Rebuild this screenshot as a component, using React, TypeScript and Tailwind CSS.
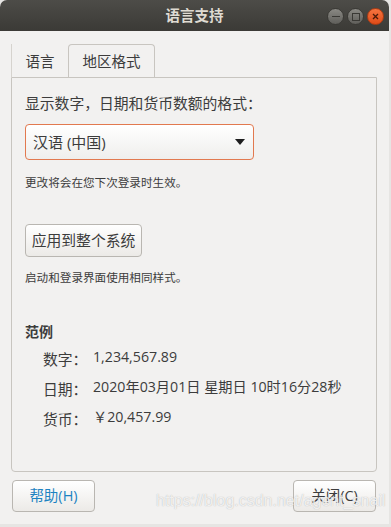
const font = { fontFamily: '"Open Sans", "Noto Sans CJK SC", sans-serif' };

const samples = [
  { label: "数字：", value: "1,234,567.89" },
  { label: "日期：", value: "2020年03月01日 星期日 10时16分28秒" },
  { label: "货币：", value: "￥20,457.99" },
];

function TitleButton({ kind }: { kind: "min" | "max" | "close" }) {
  if (kind === "close") {
    return (
      <div className="flex h-[17px] w-[17px] items-center justify-center rounded-full border border-[#b23c12] bg-gradient-to-b from-[#f6743f] to-[#df4b16]">
        <svg width="7" height="7" viewBox="0 0 7 7">
          <path d="M1 1L6 6M6 1L1 6" stroke="#4a1a08" strokeWidth="1.3" />
        </svg>
      </div>
    );
  }
  return (
    <div className="flex h-[17px] w-[17px] items-center justify-center rounded-full border border-[#3a3935] bg-gradient-to-b from-[#8a8984] to-[#5f5e5a]">
      {kind === "min" ? (
        <div className="h-[1.5px] w-[8px] bg-[#3a3935]" />
      ) : (
        <div className="h-[8px] w-[8px] border-[1.5px] border-[#3a3935]" />
      )}
    </div>
  );
}

export default function App() {
  return (
    <div className="relative h-[527px] w-[391px] overflow-hidden bg-[#e6e5e3] text-[#3c3c3c]" style={font}>
      <div className="flex h-[524px] w-[389px] flex-col overflow-hidden rounded-t-[7px] bg-[#f2f1f0]">
        {/* title bar */}
        <div className="relative flex h-[31px] shrink-0 items-center justify-center bg-gradient-to-b from-[#4d4c48] to-[#3b3a36]">
          <span className="text-[14.5px] font-bold text-[#dfdbd2]">语言支持</span>
          <div className="absolute right-[5px] top-[8px] flex gap-[3px]">
            <TitleButton kind="min" />
            <TitleButton kind="max" />
            <TitleButton kind="close" />
          </div>
        </div>

        {/* tabs */}
        <div className="ml-[11px] mt-[13px] flex h-[33px] items-stretch">
          <div className="flex w-[57px] items-center justify-center border-l border-[#d6d3ce] pt-[2px] text-[14.5px]">
            语言
          </div>
          <div className="flex w-[87px] items-center justify-center rounded-t-[4px] border border-b-0 border-[#c8c5c0] pt-[2px] text-[14.5px]">
            地区格式
          </div>
        </div>

        {/* panel */}
        <div className="ml-[11px] flex h-[395px] w-[366px] flex-col rounded-b-[4px] border border-[#c8c5c0] px-[13px]">
          <div className="mt-[15px] text-[14.8px] leading-[20px]">显示数字，日期和货币数额的格式：</div>

          <div className="mt-[11px] flex h-[36px] w-[229px] items-center justify-between rounded-[4px] border border-[#e2794f] bg-gradient-to-b from-[#ffffff] to-[#efeeec] pl-[7px] pr-[8px]">
            <span className="text-[15px]">汉语 (中国)</span>
            <svg width="10" height="6" viewBox="0 0 10 6">
              <path d="M0 0H10L5 6Z" fill="#1e1e1e" />
            </svg>
          </div>

          <div className="mt-[15px] text-[11.6px] leading-[16px]">更改将会在您下次登录时生效。</div>

          <div className="mt-[33px] flex h-[33px] w-[117px] items-center justify-center rounded-[4px] border border-[#b9b6b1] bg-gradient-to-b from-[#ffffff] to-[#eceae7] text-[14.8px]">
            应用到整个系统
          </div>

          <div className="mt-[13px] text-[11.6px] leading-[16px]">启动和登录界面使用相同样式。</div>

          <div className="mt-[36px] text-[14px] font-bold leading-[20px]">范例</div>

          <div className="mt-[1px] flex flex-col pl-[18px]">
            {samples.map((s) => (
              <div key={s.label} className="flex h-[30px] items-center">
                <span className="w-[50px] pt-[2px] text-[14.8px]">{s.label}</span>
                <span className="pb-[2px] text-[14.2px]">{s.value}</span>
              </div>
            ))}
          </div>
        </div>

        {/* bottom buttons */}
        <div className="mt-[8px] flex justify-between pl-[12px] pr-[13px]">
          <div className="flex h-[32px] w-[83px] items-center justify-center rounded-[4px] border border-[#b9b6b1] bg-gradient-to-b from-[#ffffff] to-[#eceae7] text-[14.5px] text-[#1d83c2]">
            帮助(H)
          </div>
          <div className="flex h-[32px] w-[83px] items-center justify-center rounded-[4px] border border-[#b9b6b1] bg-gradient-to-b from-[#ffffff] to-[#eceae7] text-[14.5px]">
            关闭(C)
          </div>
        </div>
      </div>

      {/* watermark */}
      <div
        className="absolute left-[156px] top-[489px] text-[16px] text-white/80"
        style={{ fontFamily: '"Liberation Sans", sans-serif', textShadow: "0 0 1px rgba(120,120,120,0.6)" }}
      >
        https://blog.csdn.net/agent_snail
      </div>
    </div>
  );
}
